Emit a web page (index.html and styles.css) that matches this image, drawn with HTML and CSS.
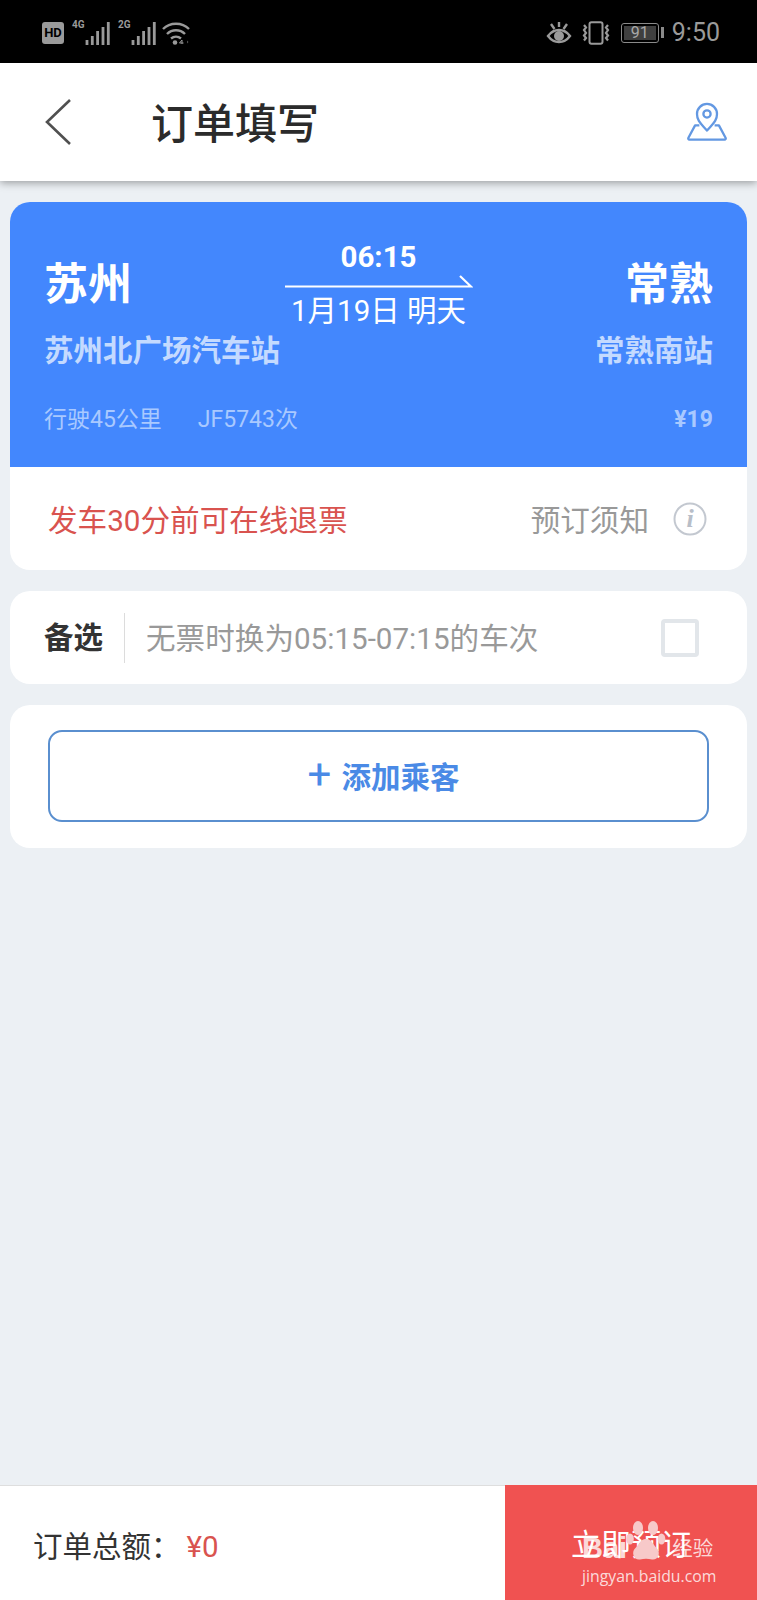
FILE: index.html
```html
<!DOCTYPE html>
<html lang="zh-CN">
<head>
    <meta charset="UTF-8" />
    <meta name="viewport" content="width=device-width, initial-scale=1.0"/>
    <title>订单填写</title>
    <link rel="stylesheet" href="styles.css">
</head>
<body>
    <div class="status-bar">
        <div class="status-left">
            <span class="hd">HD</span>
            <span class="net"><small>4G</small>
                <svg width="26" height="24" viewBox="0 0 26 24"><path d="M2 24v-5M7.300 24v-9M12.600 24V10M18 24V6M23.300 24V1" stroke="#9a9a9a" stroke-width="2.800" fill="none"/></svg>
            </span>
            <span class="net"><small>2G</small>
                <svg width="26" height="24" viewBox="0 0 26 24"><path d="M2 24v-5M7.300 24v-9M12.600 24V10M18 24V6M23.300 24V1" stroke="#9a9a9a" stroke-width="2.800" fill="none"/></svg>
            </span>
            <svg class="wifi" width="28" height="24" viewBox="0 0 28 24" fill="none" stroke="#9a9a9a" stroke-width="2.400"><path d="M1 8c7-7 19-7 26 0M5 13c5-5 13-5 18 0M9 17.500c3-2.500 7-2.500 10 0"/><circle cx="13" cy="21.500" r="2.300" fill="#9a9a9a" stroke="none"/><path d="M20 23v-4l-2.500 3h4" stroke-width="1"/><path d="M25 19.500v3l1.500-1.500z" fill="#555" stroke="none"/></svg>
        </div>
        <div class="status-right">
            <svg width="26" height="24" viewBox="0 0 26 24" fill="none" stroke="#9a9a9a" stroke-width="2.400"><path d="M2 15c6-8 16-8 22 0-6 8-16 8-22 0zM5 3l3.500 5M21 3l-3.500 5M13 1v5"/><circle cx="13" cy="15" r="5" fill="#9a9a9a" stroke="none"/></svg>
            <svg class="vibrate" width="30" height="24" viewBox="0 0 30 24" fill="none" stroke="#9a9a9a"><rect x="8.500" y="1.200" width="13" height="21.600" rx="2" stroke-width="2"/><path d="M3 4l2 2.500-2 2.500 2 3-2 2.500 2 2.500-2 2.500M27 4l-2 2.500 2 2.500-2 3 2 2.500-2 2.500 2 2.500" stroke-width="2.200"/></svg>
            <span class="battery"><span class="battery-level">91</span></span>
            <span class="battery-tip"></span>
            <span class="clock">9:50</span>
        </div>
    </div>

    <div class="top-bar">
        <svg class="back" width="30" height="50" viewBox="0 0 30 50" fill="none" stroke="#505050" stroke-width="2.600"><path d="M26 3L3 25l23 22"/></svg>
        <h1>订单填写</h1>
        <svg class="map-pin" width="40" height="40" viewBox="0 0 42 42" fill="none" stroke="#6398e2" stroke-width="2.400" stroke-linejoin="round"><path d="M21 30c-6-7-10.500-10-10.500-17.500a10.500 10.500 0 0 1 21 0C31.500 20 27 23 21 30z"/><circle cx="21" cy="12.500" r="3.800"/><path d="M13 24.500H8.500L1.500 37.500c-.500 1 0 2 1 2h37c1 0 1.500-1 1-2l-7-13H29"/></svg>
    </div>

    <div class="content">
        <div class="card ticket">
            <div class="ticket-blue">
                <div class="route">
                    <div class="stop">
                        <div class="city">苏州</div>
                        <div class="station">苏州北广场汽车站</div>
                    </div>
                    <div class="schedule">
                        <div class="time">06:15</div>
                        <svg class="arrow" width="188" height="14" viewBox="0 0 188 14" fill="none" stroke="#fff" stroke-width="2.200"><path d="M0 12.500h186L175 2"/></svg>
                        <div class="date">1月19日 明天</div>
                    </div>
                    <div class="stop stop-end">
                        <div class="city">常熟</div>
                        <div class="station">常熟南站</div>
                    </div>
                </div>
                <div class="ticket-meta">
                    <div><span class="distance">行驶45公里</span><span>JF5743次</span></div>
                    <div class="price">¥19</div>
                </div>
            </div>
            <div class="ticket-foot">
                <span class="refund">发车30分前可在线退票</span>
                <span class="notice">预订须知</span>
                <svg class="info" width="34" height="34" viewBox="0 0 34 34"><circle cx="17" cy="17" r="15.500" fill="none" stroke="#c3c8d0" stroke-width="2"/><text x="17" y="25" text-anchor="middle" class="info-i">i</text></svg>
            </div>
        </div>

        <div class="card backup">
            <span class="backup-label">备选</span>
            <span class="backup-text">无票时换为05:15-07:15的车次</span>
            <span class="checkbox"></span>
        </div>

        <div class="card passenger">
            <button class="add-btn"><span class="plus">+</span>添加乘客</button>
        </div>
    </div>

    <div class="bottom-bar">
        <div class="total">订单总额<span class="colon">：</span><span class="amount">¥0</span></div>
        <div class="submit">立即预订</div>
        <div class="watermark">
            <div class="wm-logo">Bai<svg width="40" height="42" viewBox="0 0 40 42" fill="#f7c9c9"><ellipse cx="12" cy="8" rx="5" ry="7"/><ellipse cx="27" cy="8" rx="5" ry="7"/><ellipse cx="4" cy="19" rx="3.800" ry="5.500"/><ellipse cx="35.500" cy="19" rx="3.800" ry="5.500"/><path d="M20 19c-6 0-7 6-11 9.500-4 4-1 12 5 11 4-1 8-1 12 0 6 1 9-7 5-11-4-3.500-5-9.500-11-9.500z"/></svg><span class="wm-cn">经验</span></div>
            <div class="wm-url">jingyan.baidu.com</div>
        </div>
    </div>
</body>
</html>
```

FILE: styles.css
```css
* {
    box-sizing: border-box;
}
body {
    margin: 0;
    height: 1600px;
    overflow: hidden;
    display: flex;
    flex-direction: column;
    font-family: Roboto, "Noto Sans CJK SC", sans-serif;
    background-color: #ecf0f4;
    color: #333;
}
.status-bar {
    height: 63px;
    background: #000;
    color: #9a9a9a;
    display: flex;
    justify-content: space-between;
    align-items: center;
    padding: 2px 37px 0 42px;
}
.status-left, .status-right {
    display: flex;
    align-items: center;
}
.hd {
    width: 22px;
    height: 22px;
    margin-right: 1px;
    background: #9a9a9a;
    color: #000;
    border-radius: 3px;
    font-size: 13px;
    font-weight: 700;
    line-height: 22px;
    text-align: center;
}
.net {
    display: flex;
    align-items: flex-start;
    margin-left: 7px;
}
.net small {
    width: 13px;
    font-size: 10px;
    font-weight: 700;
    line-height: 12px;
    margin-top: -2px;
}
.wifi {
    margin-left: 5px;
}
.vibrate {
    margin-left: 9px;
}
.battery {
    width: 38px;
    height: 20px;
    margin-left: 10px;
    border: 1px solid #8a8a8a;
    border-radius: 3px;
    padding: 2px;
}
.battery-level {
    display: block;
    height: 100%;
    background: #3f3f3f;
    color: #a8a8a8;
    font-size: 16px;
    line-height: 14px;
    text-align: center;
}
.battery-tip {
    width: 3px;
    height: 11px;
    margin-left: 2px;
    background: #8a8a8a;
}
.clock {
    font-size: 25px;
    margin-left: 8px;
}
.top-bar {
    height: 118px;
    background: #fff;
    display: flex;
    align-items: center;
    padding: 0 30px 0 44px;
    box-shadow: 0 2px 8px rgba(0, 0, 0, 0.35);
    position: relative;
}
.top-bar h1 {
    flex: 1;
    margin: -3px 0 0 77px;
    font-size: 42px;
    font-weight: 500;
    color: #2b2b2b;
}
.content {
    flex: 1;
    padding: 21px 10px;
    display: flex;
    flex-direction: column;
    gap: 21px;
}
.card {
    background: #fff;
    border-radius: 20px;
}
.ticket {
    height: 368px;
    overflow: hidden;
}
.ticket-blue {
    height: 265px;
    background: #4387fd;
    padding: 34px 34px 0;
    color: #fff;
}
.route {
    display: flex;
    justify-content: space-between;
    height: 157px;
}
.stop {
    width: 240px;
    padding-top: 10px;
}
.stop-end {
    text-align: right;
}
.city {
    font-size: 44px;
    font-weight: 700;
    line-height: 78px;
}
.station {
    margin-top: 5px;
    font-size: 29.500px;
    font-weight: 700;
    line-height: 44px;
    color: #c4daff;
}
.schedule {
    width: 188px;
    text-align: center;
}
.time {
    margin-top: 1px;
    font-size: 29.500px;
    font-weight: 700;
    line-height: 40px;
}
.arrow {
    display: block;
    margin-top: -3px;
}
.date {
    font-size: 29.500px;
    line-height: 40px;
    margin-top: 3px;
    white-space: nowrap;
}
.ticket-meta {
    display: flex;
    justify-content: space-between;
    margin-top: 11px;
    font-size: 23px;
    line-height: 32px;
    color: #a9c9ff;
}
.distance {
    margin-right: 36px;
}
.price {
    font-weight: 700;
}
.ticket-foot {
    height: 103px;
    display: flex;
    align-items: center;
    padding: 0 40px 0 38px;
    font-size: 29.600px;
}
.refund {
    flex: 1;
    color: #d9534f;
}
.notice {
    color: #999;
    margin-right: 24px;
}
.info-i {
    font-family: "Liberation Serif", serif;
    font-style: italic;
    font-weight: 700;
    font-size: 26px;
    fill: #b8bec8;
}
.backup {
    height: 93px;
    display: flex;
    align-items: center;
    padding: 0 48px 0 34px;
}
.backup-label {
    font-size: 29.500px;
    font-weight: 700;
    color: #333;
    padding-right: 21px;
    line-height: 50px;
    border-right: 1px solid #dcdcdc;
}
.backup-text {
    flex: 1;
    margin-left: 21px;
    margin-top: -2px;
    font-size: 29.600px;
    color: #999;
}
.checkbox {
    width: 38px;
    height: 38px;
    border: 4px solid #e2e6ea;
    border-radius: 4px;
}
.passenger {
    height: 143px;
    padding: 25px 38px;
}
.add-btn {
    width: 100%;
    height: 92px;
    background: #fff;
    border: 2px solid #5a8fcf;
    border-radius: 14px;
    padding: 0 0 2px 10px;
    font-family: inherit;
    font-size: 29.500px;
    font-weight: 700;
    color: #4a8ae6;
    display: flex;
    align-items: center;
    justify-content: center;
}
.plus {
    font-size: 42px;
    font-weight: 400;
    line-height: 38px;
    margin-right: 10px;
}
.bottom-bar {
    height: 115px;
    background: #fff;
    border-top: 1px solid #dedede;
    display: flex;
    align-items: stretch;
    position: relative;
}
.total {
    flex: 1;
    padding-left: 33px;
    font-size: 29.500px;
    line-height: 116px;
    color: #333;
}
.colon {
    font-family: "Noto Sans CJK TC", sans-serif;
}
.amount {
    color: #d9534f;
    margin-left: 6px;
}
.submit {
    width: 252px;
    margin-top: -1px;
    background: #f05251;
    color: #fff;
    font-size: 30px;
    line-height: 120px;
    text-align: center;
}
/* baidu jingyan mark over the button */
.watermark {
    position: absolute;
    left: 582px;
    top: 34px;
    color: rgba(255, 255, 255, 0.8);
}
.wm-logo {
    display: flex;
    align-items: flex-end;
    height: 42px;
    font-family: "Liberation Sans", sans-serif;
    font-size: 29px;
    font-weight: 700;
    line-height: 28px;
}
.wm-logo svg {
    margin-left: -1px;
    flex: none;
}
.wm-cn {
    font-family: "Noto Sans CJK SC", sans-serif;
    font-size: 20.500px;
    font-weight: 400;
    line-height: 30px;
    margin-left: 6px;
}
.wm-url {
    font-family: "Open Sans", sans-serif;
    font-size: 15.800px;
    line-height: 22px;
    margin-top: 3px;
    white-space: nowrap;
}
```
